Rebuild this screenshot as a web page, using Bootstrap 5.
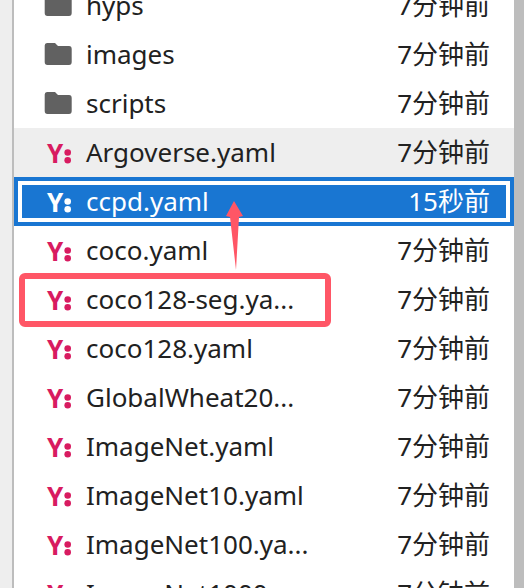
<!DOCTYPE html>
<html lang="zh-CN">
<head>
<meta charset="utf-8">
<meta name="viewport" content="width=device-width, initial-scale=1">
<title>文件列表</title>
<link href="https://cdn.jsdelivr.net/npm/bootstrap@5.3.0/dist/css/bootstrap.min.css" rel="stylesheet">
<style>
  body { background: #eee; font-family: "Noto Sans", "Noto Sans CJK SC", sans-serif; color: #212121; }
  .file-pane { margin-left: 12px; border-left: 2px solid #bdbdbd; border-right: 10px solid #bdbdbd; }
  /* the list is scrolled part-way through its first row */
  .file-list { margin-top: -19px; }
  .file-row { height: 49px; padding: 0 24px 2px 30px; font-size: 26px; line-height: 46px; white-space: nowrap; }
  .file-name { margin-left: 12px; }
  .file-icon { width: 30px; height: 30px; color: #616161; }
  .yaml-icon { color: #d81b60; font-weight: 700; }
  .is-hover { background: #eee; }
  .is-selected { background: #1976d2; color: #fff; outline: 4px solid #fff; outline-offset: -8px; }
  .is-selected .yaml-icon { color: #fff; }
  .note-box { left: 5px; top: -2px; width: 312px; height: 54px; border: 6px solid #ff5666; border-radius: 6px; }
  .note-arrow { left: 212px; top: -74px; width: 18px; height: 70px; z-index: 1; }
</style>
</head>
<body>
<svg class="d-none" aria-hidden="true">
  <symbol id="folder" viewBox="0 0 30 30"><path fill="currentColor" d="M3 4H11L14 7H25Q27.700 7 27.700 10V23Q27.700 26 25 26H3.500Q.700 26 .700 23V6.500Q.700 4 3 4Z"/></symbol>
  <symbol id="yaml" viewBox="0 0 30 30"><text x="3" y="26" fill="currentColor">Y</text><circle cx="23.700" cy="15.500" r="3.300" fill="currentColor"/><circle cx="23.700" cy="23.300" r="3.300" fill="currentColor"/></symbol>
</svg>
<main class="vh-100 overflow-hidden">
  <div class="file-pane bg-white overflow-hidden h-100">
    <ul class="file-list list-unstyled mb-0">
      <li class="file-row d-flex align-items-center"><svg class="file-icon"><use href="#folder"/></svg><span class="file-name">hyps</span><span class="ms-auto">7分钟前</span></li>
      <li class="file-row d-flex align-items-center"><svg class="file-icon"><use href="#folder"/></svg><span class="file-name">images</span><span class="ms-auto">7分钟前</span></li>
      <li class="file-row d-flex align-items-center"><svg class="file-icon"><use href="#folder"/></svg><span class="file-name">scripts</span><span class="ms-auto">7分钟前</span></li>
      <li class="file-row d-flex align-items-center is-hover"><svg class="file-icon yaml-icon"><use href="#yaml"/></svg><span class="file-name">Argoverse.yaml</span><span class="ms-auto">7分钟前</span></li>
      <li class="file-row d-flex align-items-center is-selected"><svg class="file-icon yaml-icon"><use href="#yaml"/></svg><span class="file-name">ccpd.yaml</span><span class="ms-auto">15秒前</span></li>
      <li class="file-row d-flex align-items-center"><svg class="file-icon yaml-icon"><use href="#yaml"/></svg><span class="file-name">coco.yaml</span><span class="ms-auto">7分钟前</span></li>
      <li class="file-row d-flex align-items-center position-relative"><svg class="file-icon yaml-icon"><use href="#yaml"/></svg><span class="file-name">coco128-seg.ya...</span><span class="ms-auto">7分钟前</span>
        <span class="note-box position-absolute"></span>
        <svg class="note-arrow position-absolute" viewBox="0 0 18 70" aria-hidden="true"><path fill="#ff5666" d="M8 0L17 15L13 16L10 69L4 16L0 15Z"/></svg></li>
      <li class="file-row d-flex align-items-center"><svg class="file-icon yaml-icon"><use href="#yaml"/></svg><span class="file-name">coco128.yaml</span><span class="ms-auto">7分钟前</span></li>
      <li class="file-row d-flex align-items-center"><svg class="file-icon yaml-icon"><use href="#yaml"/></svg><span class="file-name">GlobalWheat20...</span><span class="ms-auto">7分钟前</span></li>
      <li class="file-row d-flex align-items-center"><svg class="file-icon yaml-icon"><use href="#yaml"/></svg><span class="file-name">ImageNet.yaml</span><span class="ms-auto">7分钟前</span></li>
      <li class="file-row d-flex align-items-center"><svg class="file-icon yaml-icon"><use href="#yaml"/></svg><span class="file-name">ImageNet10.yaml</span><span class="ms-auto">7分钟前</span></li>
      <li class="file-row d-flex align-items-center"><svg class="file-icon yaml-icon"><use href="#yaml"/></svg><span class="file-name">ImageNet100.ya...</span><span class="ms-auto">7分钟前</span></li>
      <li class="file-row d-flex align-items-center"><svg class="file-icon yaml-icon"><use href="#yaml"/></svg><span class="file-name">ImageNet1000...</span><span class="ms-auto">7分钟前</span></li>
    </ul>
  </div>
</main>
<script src="https://cdn.jsdelivr.net/npm/bootstrap@5.3.0/dist/js/bootstrap.bundle.min.js"></script>
</body>
</html>
